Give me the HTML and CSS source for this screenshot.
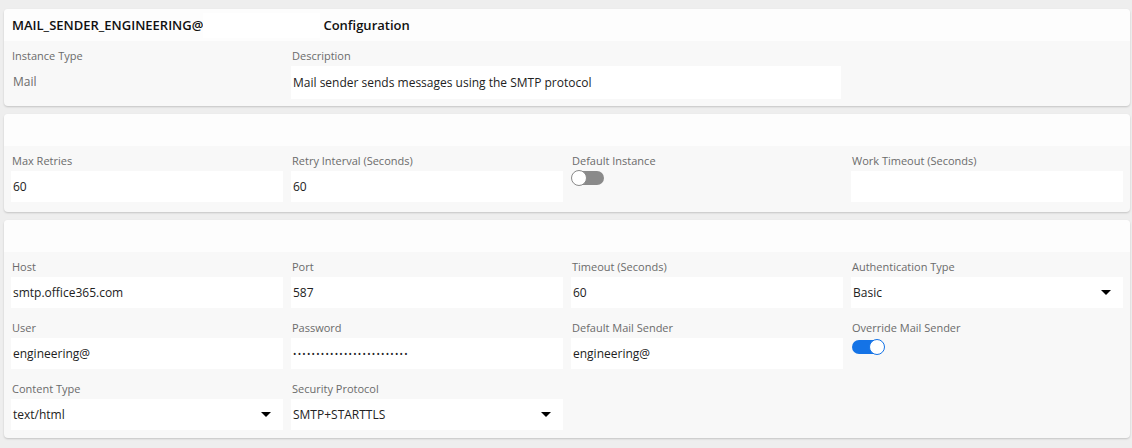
FILE: index.html
```html
<!DOCTYPE html>
<html>
    <head>
        <meta charset="utf-8">
        <title>Mail Sender Configuration</title>
        <link rel="stylesheet" href="styles.css">
    </head>
    <body>
        <div class="card">
            <div class="card-head">
                <span>MAIL_SENDER_ENGINEERING@</span><span class="redact"></span><span>Configuration</span>
            </div>
            <div class="card-body">
                <div class="field">
                    <label>Instance Type</label>
                    <div class="static-value">Mail</div>
                </div>
                <div class="field span-2">
                    <label>Description</label>
                    <input class="text-input" value="Mail sender sends messages using the SMTP protocol" readonly>
                </div>
            </div>
        </div>

        <div class="card">
            <div class="card-head"></div>
            <div class="card-body">
                <div class="field">
                    <label>Max Retries</label>
                    <input class="text-input" value="60" readonly>
                </div>
                <div class="field">
                    <label>Retry Interval (Seconds)</label>
                    <input class="text-input" value="60" readonly>
                </div>
                <div class="field">
                    <label>Default Instance</label>
                    <div class="toggle"><span class="knob"></span></div>
                </div>
                <div class="field">
                    <label>Work Timeout (Seconds)</label>
                    <input class="text-input" value="" readonly>
                </div>
            </div>
        </div>

        <div class="card">
            <div class="card-head"></div>
            <div class="card-body">
                <div class="field">
                    <label>Host</label>
                    <input class="text-input" value="smtp.office365.com" readonly>
                </div>
                <div class="field">
                    <label>Port</label>
                    <input class="text-input" value="587" readonly>
                </div>
                <div class="field">
                    <label>Timeout (Seconds)</label>
                    <input class="text-input" value="60" readonly>
                </div>
                <div class="field">
                    <label>Authentication Type</label>
                    <div class="select">Basic<span class="caret"></span></div>
                </div>

                <div class="field">
                    <label>User</label>
                    <input class="text-input" value="engineering@" readonly>
                </div>
                <div class="field">
                    <label>Password</label>
                    <input class="text-input" type="password" value="abcdefghijklmnopqrstuvwxy" readonly>
                </div>
                <div class="field">
                    <label>Default Mail Sender</label>
                    <input class="text-input" value="engineering@" readonly>
                </div>
                <div class="field">
                    <label>Override Mail Sender</label>
                    <div class="toggle on"><span class="knob"></span></div>
                </div>

                <div class="field">
                    <label>Content Type</label>
                    <div class="select">text/html<span class="caret"></span></div>
                </div>
                <div class="field">
                    <label>Security Protocol</label>
                    <div class="select">SMTP+STARTTLS<span class="caret"></span></div>
                </div>
            </div>
        </div>
    </body>
</html>
```

FILE: styles.css
```css
body {
    margin: 0;
    padding: 9px 2px 11px 4px;
    background-color: #eeeeee;
    font-family: "Open Sans", "Liberation Sans", sans-serif;
    color: #222222;
}
.card {
    background-color: #f8f8f8;
    border-radius: 4px;
    box-shadow: 0 1px 2px rgba(0,0,0,0.18);
    margin-bottom: 8px;
    overflow: hidden;
}
.card-head {
    height: 32px;
    background-color: #fdfdfd;
    display: flex;
    align-items: center;
    padding-left: 8px;
    font-size: 13px;
    font-weight: 600;
    color: #111111;
}
.redact {
    display: inline-block;
    width: 117px;
    height: 25px;
    background-color: #ffffff;
    margin: 0 3px 0 0;
}
.card-body {
    display: grid;
    grid-template-columns: repeat(4, 272px);
    column-gap: 8px;
    row-gap: 10px;
    padding: 5px 7px 10px 7px;
}
.card:first-child .card-body {
    padding-bottom: 7px;
}
.card:last-child .card-body {
    padding-bottom: 8px;
}
.field {
    display: flex;
    flex-direction: column;
}
.span-2 {
    grid-column: span 2;
}
.field label {
    font-size: 11px;
    line-height: 20px;
    color: #6b6b6b;
    padding-left: 1px;
}
.text-input {
    height: 31px;
    box-sizing: border-box;
    border: none;
    outline: none;
    background-color: #ffffff;
    padding: 0 2px;
    margin: 0;
    font-family: "Open Sans", "Liberation Sans", sans-serif;
    font-size: 12px;
    color: #222222;
}
.span-2 .text-input {
    height: 33px;
    width: 550px;
}
.text-input[type=password] {
    font-size: 9px;
    letter-spacing: 1.25px;
}
.static-value {
    height: 31px;
    line-height: 31px;
    font-size: 12px;
    color: #6b6b6b;
    padding-left: 2px;
}
.select {
    height: 31px;
    background-color: #ffffff;
    display: flex;
    align-items: center;
    justify-content: space-between;
    padding: 0 12px 0 2px;
    font-size: 12px;
}
.caret {
    width: 0;
    height: 0;
    border-left: 5px solid transparent;
    border-right: 5px solid transparent;
    border-top: 5px solid #000000;
}
.toggle {
    position: relative;
    width: 32px;
    height: 14px;
    margin-top: 0;
    margin-left: 1px;
    border-radius: 7px;
    background-color: #8a8a8a;
}
.toggle .knob {
    position: absolute;
    top: -1px;
    left: -1px;
    width: 14px;
    height: 14px;
    border-radius: 50%;
    background-color: #ffffff;
    border: 1px solid #8a8a8a;
}
.toggle.on {
    background-color: #1473e6;
    margin-top: 2px;
}
.toggle.on .knob {
    left: auto;
    right: -1px;
    border-color: #1473e6;
}
```
